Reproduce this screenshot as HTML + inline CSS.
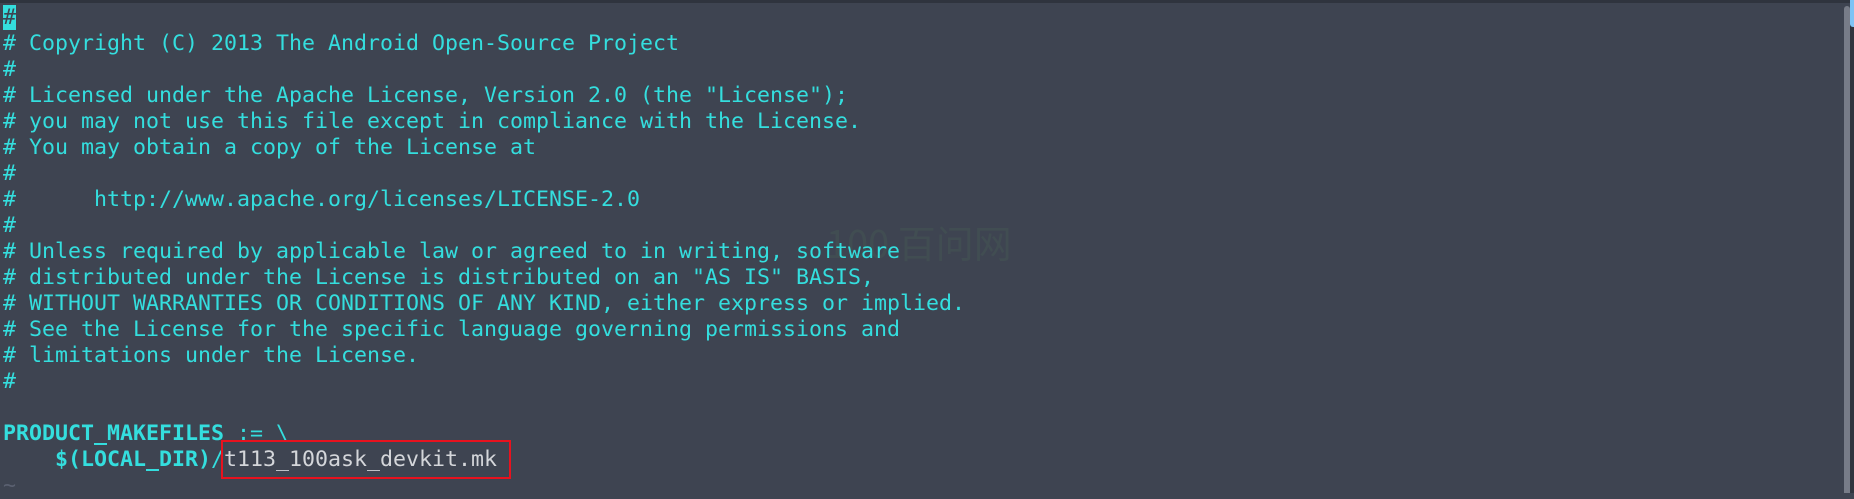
<!DOCTYPE html>
<html><head><meta charset="utf-8"><style>
html,body{margin:0;padding:0;width:1854px;height:493px;overflow:hidden;background:#3e4451;}
.top{position:absolute;left:0;top:0;width:1854px;height:3px;background:#2f343e;}
pre{position:absolute;left:3px;top:5px;margin:0;font-family:"DejaVu Sans Mono","Liberation Mono",monospace;font-size:21.6px;line-height:26px;color:#34dede;}
.cur{background:#34dede;color:#3e4451;}
b{font-weight:bold;}
.p{color:#d4d6da;}
.box{position:absolute;left:221px;top:440px;width:286px;height:35px;border:2px solid #e8121e;}
.sb{position:absolute;left:1844px;top:6px;width:6px;height:487px;background:#777c88;border-radius:3px 3px 0 0;}
.re{position:absolute;left:1850px;top:0;width:4px;height:493px;background:#30353f;}
.bl{position:absolute;left:1850px;top:0;width:4px;height:27px;background:#7ec3f5;border-radius:0 0 0 3px;}
.wm{position:absolute;left:826px;top:214px;font-family:"Noto Sans CJK SC",sans-serif;font-size:38px;color:rgba(90,150,90,0.12);}
</style></head><body>
<div class="top"></div>
<div class="wm">100 百问网</div>
<pre><span class="cur">#</span>
# Copyright (C) 2013 The Android Open-Source Project
#
# Licensed under the Apache License, Version 2.0 (the "License");
# you may not use this file except in compliance with the License.
# You may obtain a copy of the License at
#
#      http://www.apache.org/licenses/LICENSE-2.0
#
# Unless required by applicable law or agreed to in writing, software
# distributed under the License is distributed on an "AS IS" BASIS,
# WITHOUT WARRANTIES OR CONDITIONS OF ANY KIND, either express or implied.
# See the License for the specific language governing permissions and
# limitations under the License.
#

<b>PRODUCT_MAKEFILES</b> := \
    <b>$(LOCAL_DIR)</b>/<span class="p">t113_100ask_devkit.mk</span>
<span style="color:#5a6070">~</span></pre>
<div class="box"></div>
<div class="sb"></div>
<div class="re"></div>
<div class="bl"></div>
</body></html>
